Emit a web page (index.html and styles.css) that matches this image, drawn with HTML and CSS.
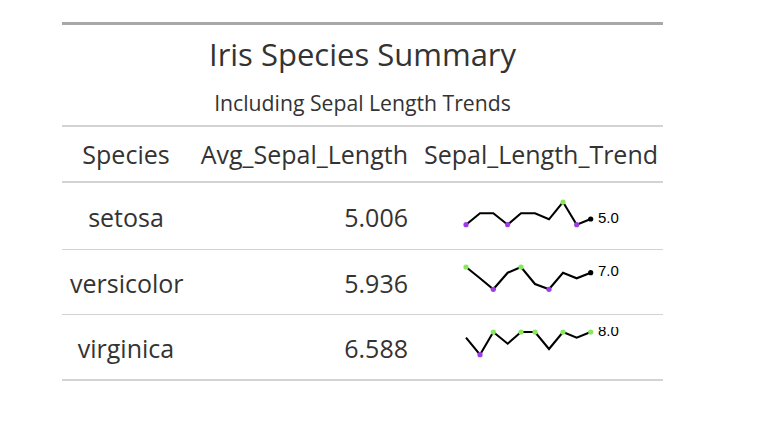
FILE: index.html
```html
<!DOCTYPE html>
<html>
<head>
<meta charset="utf-8">
<link rel="stylesheet" href="styles.css">
</head>
<body>
<div class="wrap">
<table class="gt">
  <colgroup><col class="c1"><col class="c2"><col class="c3"></colgroup>
  <thead>
    <tr><th colspan="3" class="title">Iris Species Summary</th></tr>
    <tr><th colspan="3" class="subtitle">Including Sepal Length Trends</th></tr>
    <tr class="labels">
      <th class="center">Species</th>
      <th class="right">Avg_Sepal_Length</th>
      <th class="left">Sepal_Length_Trend</th>
    </tr>
  </thead>
  <tbody>
    <tr>
      <td class="center">setosa</td>
      <td class="right">5.006</td>
      <td class="spark">
        <svg width="229" height="41" viewBox="0 0 229 41">
          <polyline class="line" points="40,28.7 54,17.3 67.3,17.3 81.7,28.7 95,17.3 109,17.3 123,23.3 137,6 150.7,28.7 164.7,23"/>
          <circle cx="40" cy="28.7" r="2.6" class="mn"/>
          <circle cx="81.7" cy="28.7" r="2.6" class="mn"/>
          <circle cx="150.7" cy="28.7" r="2.6" class="mn"/>
          <circle cx="137" cy="6" r="2.6" class="mx"/>
          <circle cx="164.7" cy="23" r="2.6" class="end"/>
          <text x="172" y="27" class="lbl">5.0</text>
        </svg>
      </td>
    </tr>
    <tr>
      <td class="center">versicolor</td>
      <td class="right">5.936</td>
      <td class="spark">
        <svg width="229" height="41" viewBox="0 0 229 41">
          <polyline class="line" points="40,5 54,16.2 67.3,27.3 81.7,10.7 95,5 109,22 123,27.3 137,10.7 150.7,16.3 164.7,10.7"/>
          <circle cx="67.3" cy="27.3" r="2.6" class="mn"/>
          <circle cx="123" cy="27.3" r="2.6" class="mn"/>
          <circle cx="40" cy="5" r="2.6" class="mx"/>
          <circle cx="95" cy="5" r="2.6" class="mx"/>
          <circle cx="164.7" cy="10.7" r="2.6" class="end"/>
          <text x="172" y="13.5" class="lbl">7.0</text>
        </svg>
      </td>
    </tr>
    <tr>
      <td class="center">virginica</td>
      <td class="right">6.588</td>
      <td class="spark">
        <svg width="229" height="41" viewBox="0 0 229 41">
          <polyline class="line" points="40,10.7 54,27.7 67.3,5 81.7,16.7 95,5 109,5 123,22 137,5 150.7,10.7 164.7,5"/>
          <circle cx="54" cy="27.7" r="2.6" class="mn"/>
          <circle cx="67.3" cy="5" r="2.6" class="mx"/>
          <circle cx="95" cy="5" r="2.6" class="mx"/>
          <circle cx="109" cy="5" r="2.6" class="mx"/>
          <circle cx="137" cy="5" r="2.6" class="mx"/>
          <circle cx="164.7" cy="5" r="2.6" class="mx"/>
          <text x="172" y="8.8" class="lbl">8.0</text>
        </svg>
      </td>
    </tr>
  </tbody>
</table>
</div>
</body>
</html>
```
FILE: styles.css
```css
html, body { margin: 0; padding: 0; background: #fff; }
body { font-family: "Open Sans", "Noto Sans", sans-serif; color: #333333; }
.wrap { padding: 22px 0 0 62px; }
.gt {
  border-collapse: collapse;
  table-layout: fixed;
  width: 601px;
  border-top: 3px solid #A8A8A8;
  border-bottom: 2px solid #D3D3D3;
}
.c1 { width: 128px; }
.c2 { width: 226px; }
.c3 { width: 247px; }
th, td { padding: 0 8px; font-weight: normal; white-space: nowrap; }
.title {
  font-size: 31px;
  text-align: center;
  height: 50px;
  padding-top: 4px;
  padding-bottom: 0;
  vertical-align: middle;
}
.subtitle {
  font-size: 21.2px;
  text-align: center;
  height: 38px;
  padding-top: 4px;
  padding-bottom: 4px;
  border-bottom: 2px solid #D3D3D3;
  vertical-align: middle;
}
.labels th {
  font-size: 25px;
  height: 54px;
  border-bottom: 2px solid #D3D3D3;
  vertical-align: middle;
}
td {
  font-size: 25px;
  height: 62px;
  border-top: 1px solid #D3D3D3;
  vertical-align: middle;
  padding-top: 2px;
  padding-bottom: 0;
}
tbody tr:first-child td { border-top: none; height: 64px; }
.center { text-align: center; }
.right { text-align: right; }
.left { text-align: left; }
.spark { padding: 0; }
.spark svg { display: block; margin: 0 0 0 10px; overflow: hidden; }
.line { fill: none; stroke: #000; stroke-width: 2.1; stroke-linejoin: miter; }
.mn { fill: #9E3BE8; }
.mx { fill: #86E85A; }
.end { fill: #000; }
.lbl { font-family: "Liberation Sans", Arial, sans-serif; font-size: 15px; fill: #000; }
```
